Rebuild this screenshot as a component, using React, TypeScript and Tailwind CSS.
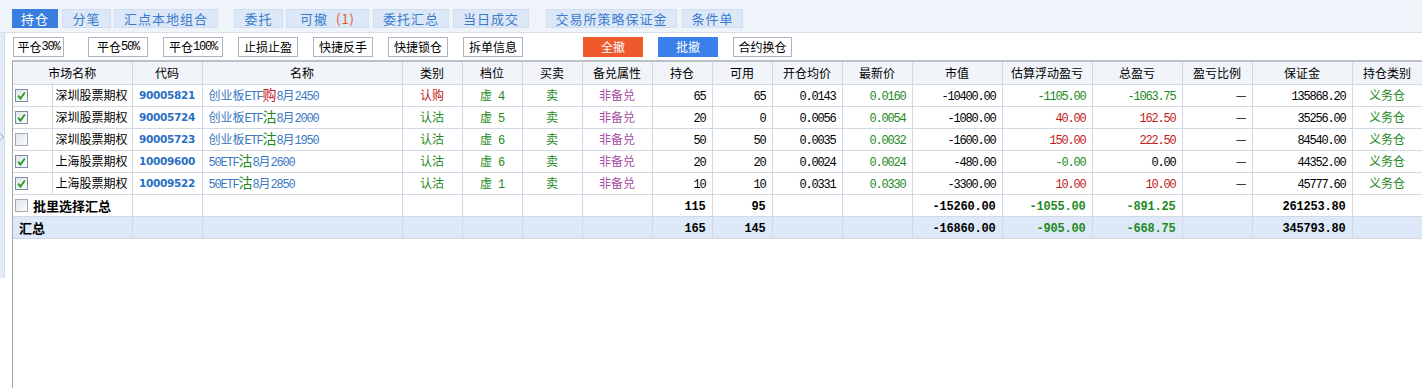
import React from "react"

type Cell = { t: string; c?: string }

const NUM = "font-['Liberation_Mono',monospace] text-[12px] tracking-[-1.2px]"
const NUMB = "font-['Liberation_Mono',monospace] text-[12px] font-bold tracking-[-0.2px]"
const CJK = "font-['Noto_Sans_CJK_SC',sans-serif] text-[12px]"

function Mixed({ text }: { text: string }) {
  const parts = text.match(/[\x00-\x7f]+|[^\x00-\x7f]+/g) ?? []
  return (
    <>
      {parts.map((p, i) =>
        /^[\x00-\x7f]/.test(p) ? (
          <span key={i} className={NUM}>{p}</span>
        ) : (
          <span key={i} className={CJK}>{p}</span>
        )
      )}
    </>
  )
}

function Check({ on }: { on: boolean }) {
  return (
    <svg width="13" height="13" viewBox="0 0 13 13" className="block">
      <defs>
        <linearGradient id="cbg" x1="0" y1="0" x2="1" y2="1">
          <stop offset="0" stopColor="#e2e6ea" />
          <stop offset="1" stopColor="#fbfcfd" />
        </linearGradient>
      </defs>
      <rect x="0.5" y="0.5" width="12" height="12" fill="url(#cbg)" stroke={on ? "#7d8ea3" : "#a3abb5"} />
      {on && <path d="M3.2 6.6 L5.4 9.6 L9.8 3.4" fill="none" stroke="#23a023" strokeWidth="1.8" />}
    </svg>
  )
}

const tabs = [
  { label: "持仓", w: "w-[46px]", ml: "ml-0", active: true },
  { label: "分笔", w: "w-[49px]", ml: "ml-[4px]" },
  { label: "汇点本地组合", w: "w-[104px]", ml: "ml-[3px]" },
  { label: "委托", w: "w-[49px]", ml: "ml-[16px]" },
  { label: "可撤", w: "w-[83px]", ml: "ml-[3px]", badge: "(1)" },
  { label: "委托汇总", w: "w-[76px]", ml: "ml-[4px]" },
  { label: "当日成交", w: "w-[76px]", ml: "ml-[4px]" },
  { label: "交易所策略保证金", w: "w-[131px]", ml: "ml-[17px]" },
  { label: "条件单", w: "w-[61px]", ml: "ml-[5px]" },
]

const tools = [
  { label: "平仓30%", w: "w-[51px]", ml: "ml-[1px]" },
  { label: "平仓50%", w: "w-[60px]", ml: "ml-[24px]" },
  { label: "平仓100%", w: "w-[60px]", ml: "ml-[15px]" },
  { label: "止损止盈", w: "w-[60px]", ml: "ml-[15px]" },
  { label: "快捷反手", w: "w-[60px]", ml: "ml-[15px]" },
  { label: "快捷锁仓", w: "w-[60px]", ml: "ml-[15px]" },
  { label: "拆单信息", w: "w-[60px]", ml: "ml-[15px]" },
  { label: "全撤", w: "w-[60px]", ml: "ml-[60px]", kind: "red" },
  { label: "批撤", w: "w-[60px]", ml: "ml-[15px]", kind: "blue" },
  { label: "合约换仓", w: "w-[59px]", ml: "ml-[15px]" },
]

const cols = [
  "w-[39px]", "w-[80px]", "w-[70px]", "w-[200px]", "w-[60px]", "w-[60px]", "w-[60px]", "w-[70px]",
  "w-[60px]", "w-[60px]", "w-[70px]", "w-[70px]", "w-[90px]", "w-[90px]", "w-[90px]", "w-[70px]",
  "w-[100px]", "w-[70px]",
]

const heads = ["代码", "名称", "类别", "档位", "买卖", "备兑属性", "持仓", "可用", "开仓均价", "最新价", "市值", "估算浮动盈亏", "总盈亏", "盈亏比例", "保证金", "持仓类别"]

const RED = "text-[#c41a1a]"
const GREEN = "text-[#1e8a1e]"
const BLACK = "text-black"

const rows = [
  {
    on: true, market: "深圳股票期权", code: "90005821", pre: "创业板ETF", opt: "购", optc: RED, post: "8月2450",
    kind: "认购", kindc: RED, level: "4",
    nums: [
      { t: "65" }, { t: "65" }, { t: "0.0143" }, { t: "0.0160", c: GREEN }, { t: "-10400.00" },
      { t: "-1105.00", c: GREEN }, { t: "-1063.75", c: GREEN },
    ] as Cell[],
    margin: "135868.20",
  },
  {
    on: true, market: "深圳股票期权", code: "90005724", pre: "创业板ETF", opt: "沽", optc: GREEN, post: "8月2000",
    kind: "认沽", kindc: GREEN, level: "5",
    nums: [
      { t: "20" }, { t: "0" }, { t: "0.0056" }, { t: "0.0054", c: GREEN }, { t: "-1080.00" },
      { t: "40.00", c: RED }, { t: "162.50", c: RED },
    ] as Cell[],
    margin: "35256.00",
  },
  {
    on: false, market: "深圳股票期权", code: "90005723", pre: "创业板ETF", opt: "沽", optc: GREEN, post: "8月1950",
    kind: "认沽", kindc: GREEN, level: "6",
    nums: [
      { t: "50" }, { t: "50" }, { t: "0.0035" }, { t: "0.0032", c: GREEN }, { t: "-1600.00" },
      { t: "150.00", c: RED }, { t: "222.50", c: RED },
    ] as Cell[],
    margin: "84540.00",
  },
  {
    on: true, market: "上海股票期权", code: "10009600", pre: "50ETF", opt: "沽", optc: GREEN, post: "8月2600",
    kind: "认沽", kindc: GREEN, level: "6",
    nums: [
      { t: "20" }, { t: "20" }, { t: "0.0024" }, { t: "0.0024", c: GREEN }, { t: "-480.00" },
      { t: "-0.00", c: GREEN }, { t: "0.00" },
    ] as Cell[],
    margin: "44352.00",
  },
  {
    on: true, market: "上海股票期权", code: "10009522", pre: "50ETF", opt: "沽", optc: GREEN, post: "8月2850",
    kind: "认沽", kindc: GREEN, level: "1",
    nums: [
      { t: "10" }, { t: "10" }, { t: "0.0331" }, { t: "0.0330", c: GREEN }, { t: "-3300.00" },
      { t: "10.00", c: RED }, { t: "10.00", c: RED },
    ] as Cell[],
    margin: "45777.60",
  },
]

const sums = [
  {
    label: "批里选择汇总", box: true, bg: "bg-white",
    vals: [{ t: "115" }, { t: "95" }, { t: "" }, { t: "" }, { t: "-15260.00" }, { t: "-1055.00", c: GREEN }, { t: "-891.25", c: GREEN }] as Cell[],
    margin: "261253.80",
  },
  {
    label: "汇总", box: false, bg: "bg-[#dde9f8]",
    vals: [{ t: "165" }, { t: "145" }, { t: "" }, { t: "" }, { t: "-16860.00" }, { t: "-905.00", c: GREEN }, { t: "-668.75", c: GREEN }] as Cell[],
    margin: "345793.80",
  },
]

const td = "h-[22px] border-r border-b border-[#cfd8e3] p-0 leading-[16px] whitespace-nowrap overflow-hidden align-middle"

export default function App() {
  return (
    <div className="flex h-[388px] w-[1422px] flex-col overflow-hidden bg-white font-['Noto_Sans_CJK_SC',sans-serif] text-black">
      {/* tabs */}
      <div className="flex h-[33px] shrink-0 items-start border-b border-[#d6dfea] bg-[#eff4fa] pl-[12px] pt-[9px]">
        {tabs.map((t) => (
          <div
            key={t.label}
            className={`${t.w} ${t.ml} flex h-[19px] items-center justify-center border text-[13px] leading-none tracking-[1px] ${
              t.active ? "border-[#3a7fe0] bg-[#3a7fe0] text-white" : "border-[#d2def0] bg-[#dce8f8] text-[#3b7bcc]"
            }`}
          >
            {t.label}
            {t.badge ? <span className="ml-[8px] text-[#e2552b]">{t.badge}</span> : null}
          </div>
        ))}
      </div>

      <div className="flex min-h-0 flex-1">
        {/* left strip */}
        <div className="flex h-[245px] w-[5px] shrink-0 justify-center border-r border-[#cfdae8] bg-[#e4ecf7] pt-[100px]">
          <svg width="4" height="8" viewBox="0 0 4 8" className="block">
            <path d="M0.5 0.5 L3.5 4 L0.5 7.5" fill="none" stroke="#8fa3bd" strokeWidth="1" />
          </svg>
        </div>

        <div className="flex min-w-0 flex-1 flex-col pl-[7px] pt-[4px]">
          {/* toolbar */}
          <div className="flex h-[20px] shrink-0">
            {tools.map((b) => (
              <div
                key={b.label}
                className={`${b.w} ${b.ml} flex h-[20px] items-center justify-center leading-none ${
                  b.kind === "red"
                    ? "bg-[#ef5a2c] text-white"
                    : b.kind === "blue"
                    ? "bg-[#3b80ea] text-white"
                    : "border border-[#adb4bd] bg-white text-black"
                }`}
              >
                <Mixed text={b.label} />
              </div>
            ))}
          </div>

          {/* table */}
          <div className="mt-[3px] flex-1 border-l border-t-2 border-l-[#a3a8ae] border-t-[#bcc1c7]">
            <table className="w-[1409px] table-fixed border-collapse">
              <colgroup>
                {cols.map((c, i) => (
                  <col key={i} className={c} />
                ))}
              </colgroup>
              <thead>
                <tr className="bg-[#f1f4f8]">
                  <th colSpan={2} className={`${td} text-center text-[12px] font-normal`}>市场名称</th>
                  {heads.map((h) => (
                    <th key={h} className={`${td} text-center text-[12px] font-normal`}>{h}</th>
                  ))}
                </tr>
              </thead>
              <tbody>
                {rows.map((r) => (
                  <tr key={r.code}>
                    <td className={`${td} pl-[2px]`}>
                      <Check on={r.on} />
                    </td>
                    <td className={`${td} pl-[3px] text-[12px]`}>{r.market}</td>
                    <td className={`${td} text-center font-['DejaVu_Sans',sans-serif] text-[10.5px] font-bold tracking-[-0.3px] text-[#2a6fc4]`}>
                      {r.code}
                    </td>
                    <td className={`${td} pl-[6px] text-[#3a78c2]`}>
                      <Mixed text={r.pre} />
                      <span className={`text-[14px] ${r.optc}`}>{r.opt}</span>
                      <Mixed text={r.post} />
                    </td>
                    <td className={`${td} text-center text-[12px] ${r.kindc}`}>{r.kind}</td>
                    <td className={`${td} text-center ${GREEN}`}>
                      <span className={CJK}>虚</span>
                      <span className={NUM}> {r.level}</span>
                    </td>
                    <td className={`${td} text-center text-[12px] ${GREEN}`}>卖</td>
                    <td className={`${td} text-center text-[12px] text-[#a64ca6]`}>非备兑</td>
                    {r.nums.map((n, i) => (
                      <td key={i} className={`${td} pr-[6px] text-right ${n.c ?? BLACK}`}>
                        <span className={NUM}>{n.t}</span>
                      </td>
                    ))}
                    <td className={`${td} pr-[5px] text-right text-[12px]`}>—</td>
                    <td className={`${td} pr-[6px] text-right`}>
                      <span className={NUM}>{r.margin}</span>
                    </td>
                    <td className={`${td} text-center text-[12px] ${GREEN}`}>义务仓</td>
                  </tr>
                ))}
                {sums.map((s) => (
                  <tr key={s.label} className={s.bg}>
                    <td colSpan={2} className={`${td} pl-[2px]`}>
                      <div className="flex items-center">
                        {s.box ? <Check on={false} /> : <span className="w-[2px]" />}
                        <span className={`${s.box ? "ml-[5px]" : "ml-[2px]"} text-[13px] font-bold leading-none`}>{s.label}</span>
                      </div>
                    </td>
                    <td className={td} />
                    <td className={td} />
                    <td className={td} />
                    <td className={td} />
                    <td className={td} />
                    <td className={td} />
                    {s.vals.map((v, i) => (
                      <td key={i} className={`${td} pr-[6px] text-right ${v.c ?? BLACK}`}>
                        <span className={NUMB}>{v.t}</span>
                      </td>
                    ))}
                    <td className={td} />
                    <td className={`${td} pr-[6px] text-right`}>
                      <span className={NUMB}>{s.margin}</span>
                    </td>
                    <td className={td} />
                  </tr>
                ))}
              </tbody>
            </table>
          </div>
        </div>
      </div>
    </div>
  )
}
